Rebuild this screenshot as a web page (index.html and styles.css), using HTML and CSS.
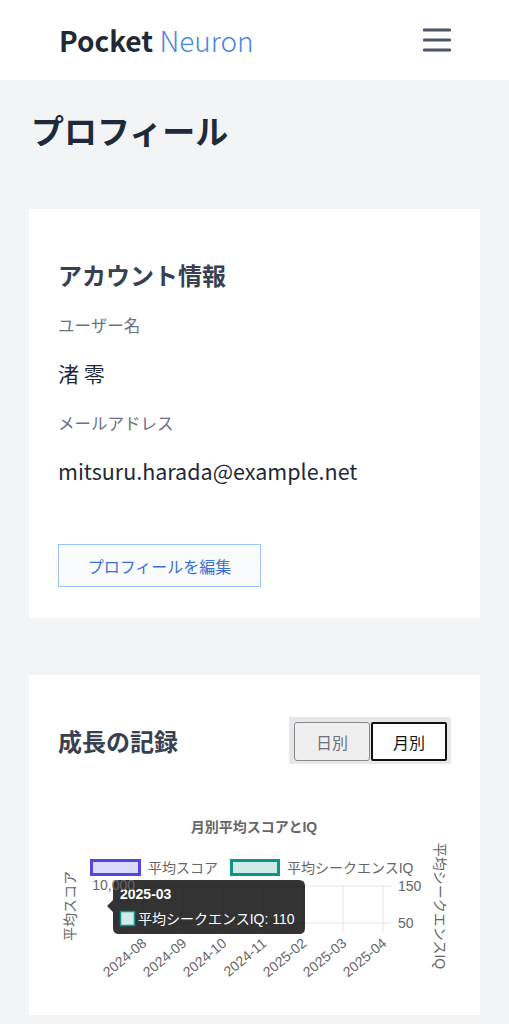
FILE: index.html
```html
<!DOCTYPE html>
<html lang="ja">
<head>
    <meta charset="UTF-8">
    <meta name="viewport" content="width=device-width, initial-scale=1.0">
    <title>プロフィール - Pocket Neuron</title>
    <link rel="stylesheet" href="styles.css">
</head>
<body>
    <header class="topbar">
        <div class="logo"><span class="logo-bold">Pocket</span> <span class="logo-light">Neuron</span></div>
        <button class="menu-btn" aria-label="メニュー">
            <svg width="28" height="26" viewBox="0 0 28 26">
                <line x1="1.5" y1="3" x2="26.5" y2="3" />
                <line x1="1.5" y1="13" x2="26.5" y2="13" />
                <line x1="1.5" y1="23" x2="26.5" y2="23" />
            </svg>
        </button>
    </header>

    <main class="page">
        <h1 class="page-title">プロフィール</h1>

        <!-- アカウント情報 -->
        <section class="card account">
            <h2 class="card-title">アカウント情報</h2>
            <div class="field-label">ユーザー名</div>
            <div class="field-value">渚 零</div>
            <div class="field-label">メールアドレス</div>
            <div class="field-value email">mitsuru.harada@example.net</div>
            <button class="edit-btn">プロフィールを編集</button>
        </section>

        <!-- 成長の記録 -->
        <section class="card growth">
            <div class="growth-head">
                <h2 class="card-title">成長の記録</h2>
                <div class="toggle">
                    <button class="toggle-btn">日別</button>
                    <button class="toggle-btn active">月別</button>
                </div>
            </div>

            <svg class="chart" width="393" height="200" viewBox="0 0 393 200">
                <text class="chart-title" x="196" y="31" text-anchor="middle">月別平均スコアとIQ</text>

                <!-- 凡例 -->
                <rect x="33.5" y="59.5" width="48" height="14" fill="#dcdafa" stroke="#4f46e5" stroke-width="3" />
                <text class="tick" x="90" y="72">平均スコア</text>
                <rect x="173.5" y="59.5" width="47" height="14" fill="#cfeae7" stroke="#0d9488" stroke-width="3" />
                <text class="tick" x="229" y="72">平均シークエンスIQ</text>

                <!-- 軸タイトル -->
                <text class="tick" transform="translate(17 105) rotate(-90)" text-anchor="middle">平均スコア</text>
                <text class="tick" transform="translate(377 105) rotate(90)" text-anchor="middle">平均シークエンスIQ</text>

                <!-- グリッド -->
                <g class="grid">
                    <line x1="85" y1="85" x2="85" y2="131" />
                    <line x1="125" y1="85" x2="125" y2="131" />
                    <line x1="165" y1="85" x2="165" y2="131" />
                    <line x1="205" y1="85" x2="205" y2="131" />
                    <line x1="245" y1="85" x2="245" y2="131" />
                    <line x1="285" y1="85" x2="285" y2="131" />
                    <line x1="325" y1="85" x2="325" y2="131" />
                    <line x1="85" y1="85" x2="333" y2="85" />
                    <line x1="85" y1="122" x2="333" y2="122" />
                </g>

                <text class="tick" x="340" y="90">150</text>
                <text class="tick" x="340" y="127">50</text>

                <!-- X軸ラベル -->
                <g class="tick">
                    <text transform="translate(87 141) rotate(-40)" text-anchor="end" dominant-baseline="middle">2024-08</text>
                    <text transform="translate(127 141) rotate(-40)" text-anchor="end" dominant-baseline="middle">2024-09</text>
                    <text transform="translate(167 141) rotate(-40)" text-anchor="end" dominant-baseline="middle">2024-10</text>
                    <text transform="translate(207 141) rotate(-40)" text-anchor="end" dominant-baseline="middle">2024-11</text>
                    <text transform="translate(247 141) rotate(-40)" text-anchor="end" dominant-baseline="middle">2025-02</text>
                    <text transform="translate(287 141) rotate(-40)" text-anchor="end" dominant-baseline="middle">2025-03</text>
                    <text transform="translate(327 141) rotate(-40)" text-anchor="end" dominant-baseline="middle">2025-04</text>
                </g>

                <!-- ツールチップ -->
                <path class="tooltip-box" d="M61 79 H241 Q247 79 247 85 V127 Q247 133 241 133 H61 Q55 133 55 127 V111 L49 105 L55 99 V85 Q55 79 61 79 Z" />
                <text class="tooltip-title" x="62" y="98">2025-03</text>
                <rect x="62.5" y="110.5" width="14" height="14" fill="#cfeae7" stroke="#0d9488" stroke-width="1.5" />
                <text class="tooltip-body" x="80" y="123">平均シークエンスIQ: 110</text>

                <!-- 左軸の目盛り（ツールチップに少し重なる） -->
                <text class="tick" x="77" y="89" text-anchor="end">10,000</text>
            </svg>
        </section>
    </main>
</body>
</html>
```

FILE: styles.css
```css
body {
    margin: 0;
    padding: 0;
    background-color: #f3f4f6;
    font-family: "Noto Sans CJK JP", "Noto Sans", sans-serif;
    color: #1f2937;
}

/* ヘッダー */
.topbar {
    height: 80px;
    background-color: #fff;
    display: flex;
    justify-content: space-between;
    align-items: center;
    padding: 0 58px 0 59px;
}

.logo {
    font-size: 28px;
    line-height: 1;
}

.logo-bold {
    font-weight: 700;
    color: #1f2937;
}

.logo-light {
    font-weight: 300;
    color: #4a86e0;
}

.menu-btn {
    background: transparent;
    border: none;
    padding: 0;
    cursor: pointer;
    display: flex;
}

.menu-btn line {
    stroke: #4b5563;
    stroke-width: 3.2;
    stroke-linecap: round;
}

/* ページ本体 */
.page {
    padding: 0 29px 40px;
}

.page-title {
    font-size: 33px;
    line-height: 48px;
    font-weight: 700;
    margin: 26px 0 55px 2px;
    color: #1e293b;
}

.card {
    background-color: #fff;
}

.account {
    padding: 49px 29px 31px;
}

.card-title {
    font-size: 24px;
    line-height: 34px;
    font-weight: 700;
    color: #374151;
    margin: 0 0 21px;
}

.field-label {
    font-size: 16.5px;
    line-height: 24px;
    color: #6b7280;
    margin-bottom: 21px;
}

.field-value {
    font-size: 21px;
    line-height: 30px;
    color: #1f2937;
    margin-bottom: 23px;
}

.field-value.email {
    font-size: 21.5px;
    margin-bottom: 58px;
}

.edit-btn {
    font-family: inherit;
    font-size: 16px;
    color: #3b6fd4;
    background-color: #f9fafb;
    border: 1px solid #9ec1f7;
    width: 203px;
    height: 43px;
    padding: 0;
    cursor: pointer;
    display: block;
}

/* 成長の記録 */
.growth {
    margin-top: 57px;
    padding: 42px 29px 14px;
}

.growth-head {
    display: flex;
    justify-content: space-between;
    align-items: center;
}

.growth-head .card-title {
    margin: 0;
}

.toggle {
    background-color: #e5e7eb;
    display: flex;
    gap: 1px;
    padding: 5px 4px 3px 5px;
}

.toggle-btn {
    font-family: inherit;
    font-size: 16px;
    width: 76px;
    height: 39px;
    padding: 0;
    background-color: #efefef;
    color: #6b7280;
    border: 1px solid #8a8a8a;
    border-radius: 3px;
    cursor: pointer;
}

.toggle-btn.active {
    background-color: #fff;
    color: #111;
    border: 2px solid #111;
    border-radius: 2px;
}

.chart {
    display: block;
    margin-top: 37px;
    font-family: "Liberation Sans", "Noto Sans CJK JP", sans-serif;
}

.chart-title {
    font-size: 14px;
    font-weight: 700;
    fill: #666;
}

.tick {
    font-size: 14px;
    fill: #666;
}

.grid line {
    stroke: #e4e4e4;
    stroke-width: 1;
}

.tooltip-box {
    fill: rgba(0, 0, 0, 0.8);
}

.tooltip-title {
    font-size: 14px;
    font-weight: 700;
    fill: #fff;
}

.tooltip-body {
    font-size: 14px;
    fill: #fff;
}
```
